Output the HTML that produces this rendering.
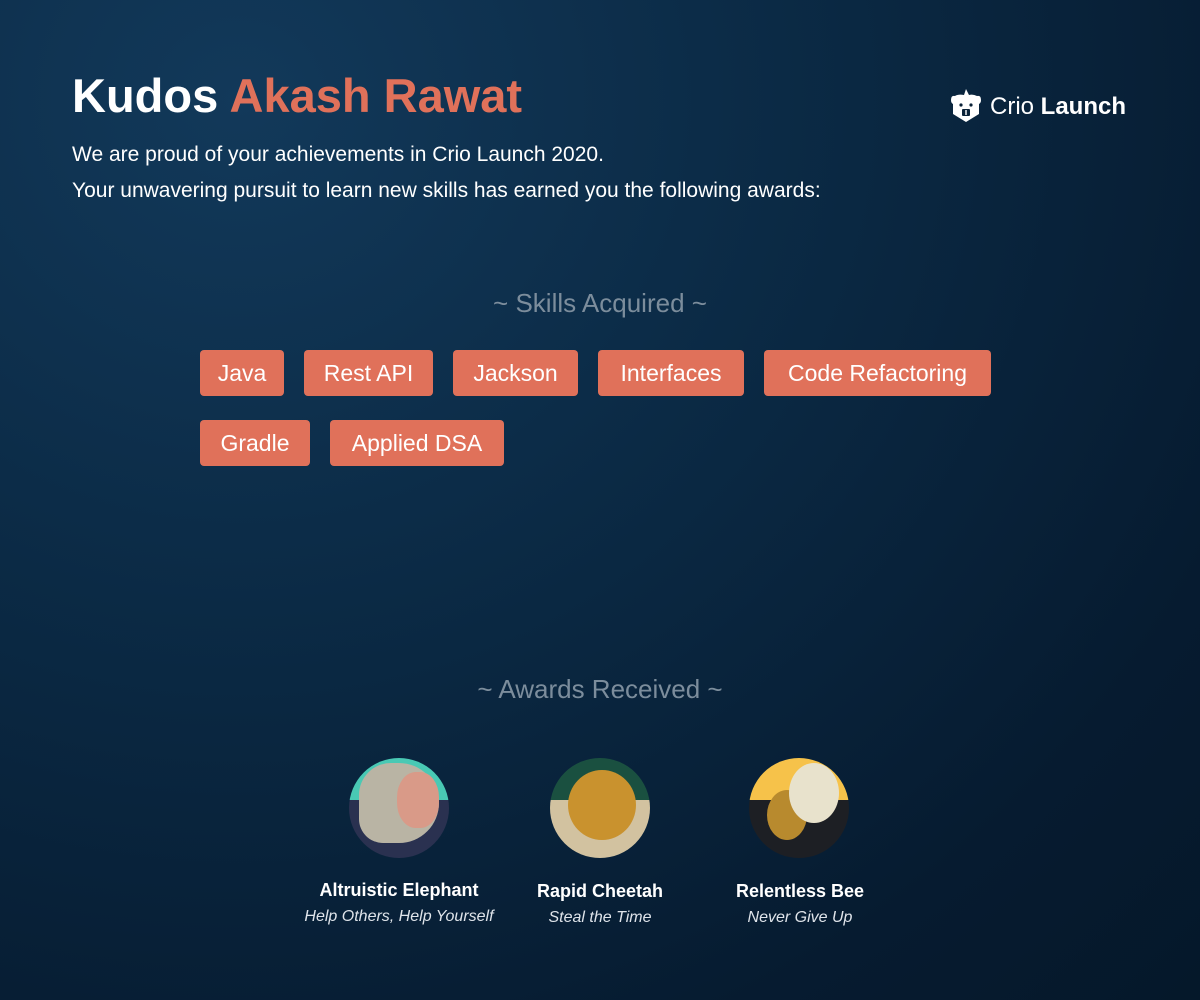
<!DOCTYPE html>
<html><head><style>
body{margin:0;width:1200px;height:1000px;overflow:hidden;font-family:"Liberation Sans",sans-serif;color:#fff;
background:radial-gradient(ellipse at 20% 10%,#12395a 0%,#0b2a45 40%,#061b30 80%,#05182a 100%);position:relative}
.a{position:absolute}
h1{position:absolute;left:72px;top:66px;margin:0;font-size:47px;font-weight:bold;line-height:60px}
h1 span{color:#e0715a}
.p{position:absolute;left:72px;font-size:21px}
.hd{position:absolute;width:1200px;text-align:center;font-size:26px;color:#7c8d9c}
.t{position:absolute;height:46px;line-height:46px;background:#e0715a;border-radius:4px;font-size:23px;text-align:center;color:#fff}
.c{position:absolute;width:100px;height:100px;border-radius:50%;overflow:hidden}
.n{position:absolute;width:240px;text-align:center;font-size:18px;font-weight:bold}
.s{position:absolute;width:240px;text-align:center;font-size:16px;font-style:italic;color:#dfe4ea}
</style></head><body>
<h1>Kudos <span>Akash Rawat</span></h1>
<div class="a" style="left:950px;top:87px;width:32px;height:36px">
<svg width="32" height="36" viewBox="0 0 32 36"><path d="M16 2 L14 8 Q8 7 5 9 Q1 8 1 13 Q1 16 3 17 L3 27 L16 35 L29 27 L29 17 Q31 16 31 13 Q31 8 27 9 Q23 7 19 8 Z" fill="#fff"/><circle cx="11" cy="18" r="1.6" fill="#0a2238"/><circle cx="21" cy="18" r="1.6" fill="#0a2238"/><rect x="12" y="22" width="8" height="7" rx="1" fill="#0a2238"/><rect x="15.3" y="23" width="1.4" height="5" fill="#fff"/></svg></div>
<div class="a" style="left:990px;top:92px;font-size:24px;line-height:30px">Crio <b>Launch</b></div>
<div class="p" style="top:143px">We are proud of your achievements in Crio Launch 2020.</div>
<div class="p" style="top:179px">Your unwavering pursuit to learn new skills has earned you the following awards:</div>
<div class="hd" style="top:288px">~ Skills Acquired ~</div>
<div class="t" style="left:200px;top:350px;width:84px">Java</div>
<div class="t" style="left:304px;top:350px;width:129px">Rest API</div>
<div class="t" style="left:453px;top:350px;width:125px">Jackson</div>
<div class="t" style="left:598px;top:350px;width:146px">Interfaces</div>
<div class="t" style="left:764px;top:350px;width:227px">Code Refactoring</div>
<div class="t" style="left:200px;top:420px;width:110px">Gradle</div>
<div class="t" style="left:330px;top:420px;width:174px">Applied DSA</div>
<div class="hd" style="top:674px">~ Awards Received ~</div>
<div class="c" style="left:349px;top:758px;background:linear-gradient(#49c9b4 0,#49c9b4 42%,#2a3150 42%)"><div class="a" style="left:10px;top:5px;width:80px;height:80px;border-radius:40% 50% 50% 30%;background:#b9b4a4"></div><div class="a" style="left:48px;top:14px;width:42px;height:56px;border-radius:45%;background:#d99a88"></div></div>
<div class="c" style="left:550px;top:758px;background:linear-gradient(#1a5040 0,#1a5040 42%,#d2c2a0 42%)"><div class="a" style="left:18px;top:12px;width:68px;height:70px;border-radius:50%;background:#c9922e"></div></div>
<div class="c" style="left:749px;top:758px;background:linear-gradient(#f6c24a 0,#f6c24a 42%,#1d1f24 42%)"><div class="a" style="left:18px;top:32px;width:40px;height:50px;border-radius:50%;background:#b88a2e"></div><div class="a" style="left:40px;top:5px;width:50px;height:60px;border-radius:50%;background:#e8e2cc"></div></div>
<div class="n" style="left:279px;top:880px">Altruistic Elephant</div>
<div class="s" style="left:279px;top:908px">Help Others, Help Yourself</div>
<div class="n" style="left:480px;top:881px">Rapid Cheetah</div>
<div class="s" style="left:480px;top:909px">Steal the Time</div>
<div class="n" style="left:680px;top:881px">Relentless Bee</div>
<div class="s" style="left:680px;top:909px">Never Give Up</div>
</body></html>
